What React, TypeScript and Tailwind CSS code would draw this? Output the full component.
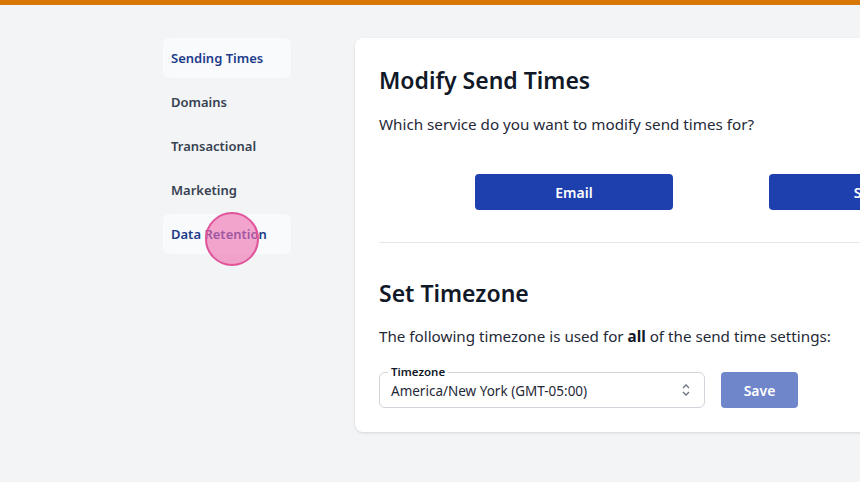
import React from "react";

const items = ["Sending Times", "Domains", "Transactional", "Marketing", "Data Retention"];

export default function App() {
  return (
    <div
      className="relative w-[860px] h-[482px] overflow-hidden bg-[#f3f4f6]"
      style={{ fontFamily: '"Noto Sans", "Open Sans", sans-serif' }}
    >
      <div className="h-[5px] bg-[#d97706]" />
      <div className="flex pt-[33px] pl-[163px] gap-[64px]">
        <nav className="w-[128px] flex flex-col gap-[4px] shrink-0">
          {items.map((t, i) => {
            const active = i === 0 || i === 4;
            return (
              <div
                key={t}
                className={`h-[40px] flex items-center px-[8px] pt-[2px] rounded-md text-[13px] font-semibold ${
                  active ? "bg-[#f8fafc] text-[#1e3a8a]" : "text-[#374151]"
                }`}
              >
                {t}
              </div>
            );
          })}
        </nav>
        <div className="w-[720px] shrink-0 bg-white rounded-lg shadow-[0_1px_3px_rgba(0,0,0,0.12)] px-[24px] pt-[24px] pb-[24px] h-[394px]">
          <h2 className="text-[23px] font-semibold text-[#111827] leading-[36px]">Modify Send Times</h2>
          <p className="mt-[14px] text-[15.2px] text-[#1f2937] leading-[24px]">
            Which service do you want to modify send times for?
          </p>
          <div className="flex gap-[96px] pl-[96px] mt-[38px]">
            <button className="w-[198px] h-[36px] rounded bg-[#1e40af] text-white text-[14px] font-semibold">Email</button>
            <button className="w-[198px] h-[36px] rounded bg-[#1e40af] text-white text-[14px] font-semibold">SMS</button>
          </div>
          <div className="mt-[32px] border-t border-[#e5e7eb]" />
          <h2 className="mt-[32px] text-[23px] font-semibold text-[#111827] leading-[36px]">Set Timezone</h2>
          <p className="mt-[13px] text-[15.2px] text-[#1f2937] leading-[24px]">
            The following timezone is used for <b className="font-bold text-[#111827]">all</b> of the send time settings:
          </p>
          <div className="flex items-center gap-[16px] mt-[24px]">
            <div className="relative w-[326px] h-[36px] border border-[#d1d5db] rounded-md flex items-center pl-[11px] pr-[12px]">
              <span className="absolute left-[8px] top-[-8px] bg-white px-[3px] text-[11.5px] font-semibold leading-[14px] text-[#111827]">
                Timezone
              </span>
              <span className="text-[13.5px] text-[#1f2937] mt-[2px] flex-1">America/New York (GMT-05:00)</span>
              <svg width="12" height="16" viewBox="0 0 12 16" fill="none" stroke="#6b7280" strokeWidth="1.3">
                <path d="M3 6l3-3 3 3M3 10l3 3 3-3" />
              </svg>
            </div>
            <button className="w-[77px] h-[36px] rounded bg-[#6f86cb] text-white text-[14px] font-semibold">Save</button>
          </div>
        </div>
      </div>
      <div className="absolute left-[205px] top-[212px] w-[54px] h-[54px] rounded-full bg-[#f06aae]/60 border-2 border-[#e0549a]" />
    </div>
  );
}
